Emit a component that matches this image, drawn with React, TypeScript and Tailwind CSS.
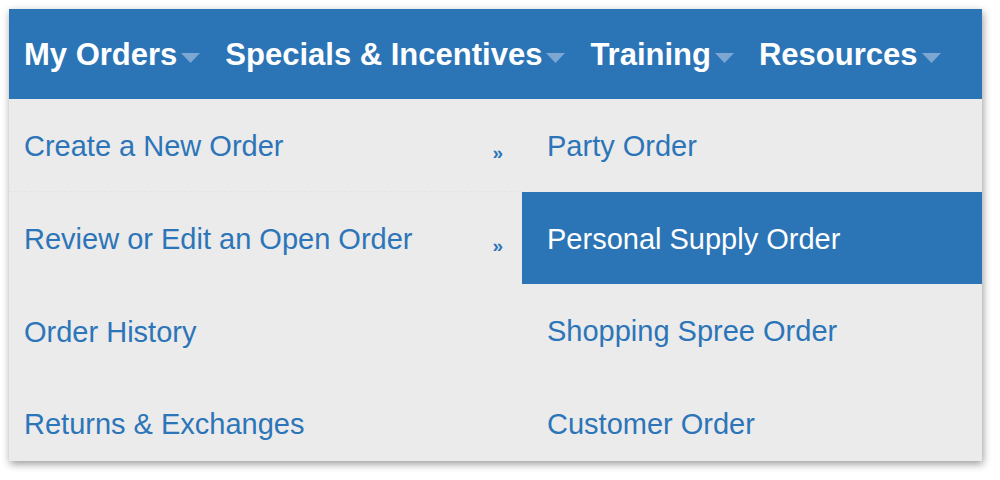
import React from "react";

const navItems = ["My Orders", "Specials & Incentives", "Training", "Resources"];

const leftItems = [
  { label: "Create a New Order", arrow: true },
  { label: "Review or Edit an Open Order", arrow: true },
  { label: "Order History", arrow: false },
  { label: "Returns & Exchanges", arrow: false },
];

const rightItems = [
  { label: "Party Order", active: false },
  { label: "Personal Supply Order", active: true },
  { label: "Shopping Spree Order", active: false },
  { label: "Customer Order", active: false },
];

function Caret() {
  return (
    <svg width="19" height="10" viewBox="0 0 19 10" className="ml-[4px] mt-[8px] shrink-0">
      <polygon points="0,0 19,0 9.5,10" fill="#7ba7d2" />
    </svg>
  );
}

export default function App() {
  return (
    <div
      className="w-[1000px] h-[480px] bg-white pt-[9px] pl-[9px]"
      style={{ fontFamily: '"Liberation Sans", Arial, Helvetica, sans-serif' }}
    >
      <div className="w-[973px] h-[452px] bg-[#ebebeb] shadow-[1px_3px_8px_rgba(0,0,0,0.4)] overflow-hidden">
        <div className="h-[90px] bg-[#2b74b6] flex items-center pl-[15px] gap-[25px]">
          {navItems.map((n) => (
            <div key={n} className="flex items-center">
              <span className="text-white font-bold text-[31px] leading-none whitespace-nowrap">{n}</span>
              <Caret />
            </div>
          ))}
        </div>
        <div className="flex h-[362px]">
          <div className="w-[513px] flex flex-col">
            {leftItems.map((it, i) => (
              <div
                key={it.label}
                className={
                  "h-[92.5px] shrink-0 flex items-center justify-between pl-[15px] pr-[19px] " +
                  (i === 0 ? "border-b border-dashed border-[#e4e4e4]" : "")
                }
              >
                <span className="text-[#2c75b8] text-[29px] leading-none whitespace-nowrap mt-[4px]">
                  {it.label}
                </span>
                {it.arrow && (
                  <span className="text-[#2c75b8] text-[19px] font-bold leading-none mt-[15px]">»</span>
                )}
              </div>
            ))}
          </div>
          <div className="w-[460px] flex flex-col">
            {rightItems.map((it) => (
              <div
                key={it.label}
                className={
                  "h-[92.5px] shrink-0 flex items-center pl-[25px] " +
                  (it.active ? "bg-[#2b74b6]" : "")
                }
              >
                <span
                  className={
                    "text-[29px] leading-none whitespace-nowrap mt-[3px] " +
                    (it.active ? "text-white" : "text-[#2c75b8]")
                  }
                >
                  {it.label}
                </span>
              </div>
            ))}
          </div>
        </div>
      </div>
    </div>
  );
}
